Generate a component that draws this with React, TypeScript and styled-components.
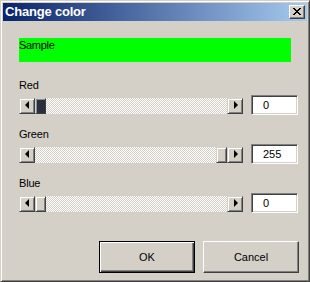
import React from 'react';
import styled, { createGlobalStyle } from 'styled-components';

const GlobalStyle = createGlobalStyle`
  html, body {
    margin: 0;
    padding: 0;
    background: #d4d0c8;
  }
  body {
    font-family: "Liberation Sans", Arial, sans-serif;
    font-size: 11px;
  }
`;

const Window = styled.div`
  box-sizing: border-box;
  width: 310px;
  height: 282px;
  background: #d4d0c8;
  border: 1px solid;
  border-color: #d4d0c8 #404040 #404040 #d4d0c8;
  box-shadow: inset 1px 1px #ffffff, inset -1px -1px #808080;
  padding: 2px;
  display: flex;
  flex-direction: column;
`;

const TitleBar = styled.div`
  height: 18px;
  display: flex;
  align-items: center;
  justify-content: space-between;
  padding: 0 2px 0 2px;
  background: linear-gradient(to right, #0a246a, #a6caf0);
`;

const Title = styled.span`
  color: #ffffff;
  font-weight: bold;
  font-size: 13px;
  letter-spacing: -0.2px;
  line-height: 18px;
`;

const CloseButton = styled.div`
  box-sizing: border-box;
  width: 16px;
  height: 14px;
  background: #d4d0c8;
  border: 1px solid;
  border-color: #ffffff #404040 #404040 #ffffff;
  box-shadow: inset -1px -1px #808080;
  display: flex;
  align-items: center;
  justify-content: center;
  padding-right: 1px;
  padding-bottom: 1px;
`;

const Content = styled.div`
  flex: 1;
  display: flex;
  flex-direction: column;
  padding: 17px 8px 0 16px;
`;

const Sample = styled.div<{ $color: string }>`
  height: 24px;
  margin-right: 8px;
  background: ${p => p.$color};
  color: #000;
  line-height: 13px;
  padding-top: 1px;
  box-sizing: border-box;
  letter-spacing: -0.3px;
`;

const Groups = styled.div`
  display: flex;
  flex-direction: column;
  gap: 12px;
  margin-top: 16px;
`;

const Group = styled.div`
  display: flex;
  flex-direction: column;
  gap: 3px;
`;

const Label = styled.div`
  height: 13px;
  line-height: 13px;
  padding-top: 1px;
  color: #000;
  letter-spacing: -0.2px;
`;

const Row = styled.div`
  display: flex;
  align-items: center;
  gap: 8px;
  height: 20px;
`;

const Scrollbar = styled.div`
  width: 224px;
  height: 16px;
  display: flex;
  margin-top: 1px;
`;

const Track = styled.div`
  position: relative;
  flex: 1;
  background-color: #d4d0c8;
  background-image: repeating-conic-gradient(#ffffff 0 25%, #d4d0c8 0 50%);
  background-size: 2px 2px;
`;

const ArrowButton = styled.div<{ $dir: 'left' | 'right' }>`
  box-sizing: border-box;
  width: 16px;
  height: 16px;
  background: #d4d0c8;
  border: 1px solid;
  border-color: #d4d0c8 #404040 #404040 #d4d0c8;
  box-shadow: inset 1px 1px #ffffff, inset -1px -1px #808080;
  display: flex;
  align-items: center;
  justify-content: center;

  &::before {
    content: '';
    width: 0;
    height: 0;
    border-top: 4px solid transparent;
    border-bottom: 4px solid transparent;
    ${p => (p.$dir === 'left' ? 'border-right: 4px solid #000;' : 'border-left: 4px solid #000;')}
    margin-left: ${p => (p.$dir === 'left' ? '-1px' : '1px')};
    margin-top: -1px;
  }
`;

const Thumb = styled.div<{ $focused: boolean }>`
  position: absolute;
  top: 0;
  box-sizing: border-box;
  width: 11px;
  height: 16px;
  background: ${p => (p.$focused ? '#2b2f3b' : '#d4d0c8')};
  border: 1px solid;
  border-color: #d4d0c8 #404040 #404040 #d4d0c8;
  box-shadow: ${p => (p.$focused ? 'inset 1px 1px #8a8e98' : 'inset 1px 1px #ffffff, inset -1px -1px #808080')};
`;

const Edit = styled.div`
  box-sizing: border-box;
  width: 47px;
  height: 20px;
  background: #ffffff;
  border: 1px solid;
  border-color: #808080 #ffffff #ffffff #808080;
  box-shadow: inset 1px 1px #404040, inset -1px -1px #d4d0c8;
  padding-left: 11px;
  line-height: 18px;
  color: #000;
`;

const Buttons = styled.div`
  display: flex;
  justify-content: flex-end;
  gap: 8px;
  margin-top: 28px;
`;

const Button = styled.div<{ $default?: boolean }>`
  box-sizing: border-box;
  width: 96px;
  height: 32px;
  background: #d4d0c8;
  display: flex;
  align-items: center;
  justify-content: center;
  color: #000;
  border: 1px solid;
  border-color: ${p => (p.$default ? '#000000' : '#ffffff #404040 #404040 #ffffff')};
  box-shadow: ${p =>
    p.$default
      ? 'inset 1px 1px #ffffff, inset -1px -1px #404040, inset -2px -2px #808080'
      : 'inset -1px -1px #808080'};
`;

const CloseIcon = () => (
  <svg width="8" height="7" viewBox="0 0 8 7" shapeRendering="crispEdges">
    <path d="M0 0h2v1H0zM6 0h2v1H6zM1 1h2v1H1zM5 1h2v1H5zM2 2h4v1H2zM3 3h2v1H3zM2 4h4v1H2zM1 5h2v1H1zM5 5h2v1H5zM0 6h2v1H0zM6 6h2v1H6z" fill="#000" />
  </svg>
);

const channels = [
  { name: 'Red', value: 0, focused: true },
  { name: 'Green', value: 255, focused: false },
  { name: 'Blue', value: 0, focused: false },
];

const TRACK = 224 - 32;
const THUMB = 11;

const App: React.FC = () => {
  const [r, g, b] = channels.map(c => c.value);

  return (
    <>
      <GlobalStyle />
      <Window>
        <TitleBar>
          <Title>Change color</Title>
          <CloseButton>
            <CloseIcon />
          </CloseButton>
        </TitleBar>
        <Content>
          <Sample $color={`rgb(${r}, ${g}, ${b})`}>Sample</Sample>
          <Groups>
            {channels.map(c => (
              <Group key={c.name}>
                <Label>{c.name}</Label>
                <Row>
                  <Scrollbar>
                    <ArrowButton $dir="left" />
                    <Track>
                      <Thumb
                        $focused={c.focused}
                        style={{ left: Math.round((c.value / 255) * (TRACK - THUMB)) }}
                      />
                    </Track>
                    <ArrowButton $dir="right" />
                  </Scrollbar>
                  <Edit>{c.value}</Edit>
                </Row>
              </Group>
            ))}
          </Groups>
          <Buttons>
            <Button $default>OK</Button>
            <Button>Cancel</Button>
          </Buttons>
        </Content>
      </Window>
    </>
  );
};

export default App;
